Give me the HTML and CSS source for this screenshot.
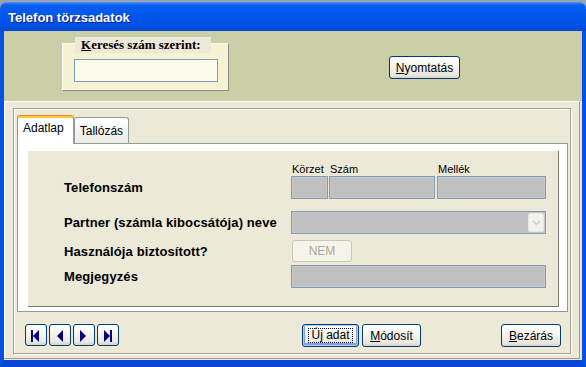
FILE: index.html
```html
<!DOCTYPE html>
<html lang="hu">
<head>
    <meta charset="UTF-8">
    <meta name="viewport" content="width=device-width, initial-scale=1.0">
    <title>Telefon törzsadatok</title>
    <link rel="stylesheet" href="styles.css">
</head>
<body>
    <div class="window">
        <div class="titlebar">Telefon törzsadatok</div>
        <div class="client">
            <div class="top">
                <div class="search-box">
                    <span class="search-label"><u>K</u>eresés szám szerint:</span>
                    <input type="text" class="search-input">
                </div>
                <button class="btn print-btn"><u>N</u>yomtatás</button>
            </div>
            <div class="panel">
                <div class="frame">
                    <div class="tabs">
                        <div class="tab active">Adatlap</div>
                        <div class="tab">Tallózás</div>
                    </div>
                    <div class="page">
                        <div class="form">
                            <div class="row head-row">
                                <span class="lbl"></span>
                                <span class="c-korzet">Körzet</span>
                                <span class="c-szam">Szám</span>
                                <span class="c-mellek">Mellék</span>
                            </div>
                            <div class="row phone-row">
                                <span class="lbl">Telefonszám</span>
                                <span class="field c-korzet"></span>
                                <span class="field c-szam"></span>
                                <span class="field c-mellek"></span>
                            </div>
                            <div class="row partner-row">
                                <span class="lbl">Partner (számla kibocsátója) neve</span>
                                <span class="field combo">
                                    <span class="combo-arrow">
                                        <svg width="9" height="6" viewBox="0 0 9 6"><path d="M1 1 L4.5 4.5 L8 1" fill="none" stroke="#d4d2c6" stroke-width="1.6"/></svg>
                                    </span>
                                </span>
                            </div>
                            <div class="row insured-row">
                                <span class="lbl">Használója biztosított?</span>
                                <button class="btn-disabled" disabled>NEM</button>
                            </div>
                            <div class="row note-row">
                                <span class="lbl">Megjegyzés</span>
                                <span class="field wide"></span>
                            </div>
                        </div>
                    </div>
                    <div class="bottom">
                        <div class="nav">
                            <button class="btn nav-btn"><svg width="20" height="20" viewBox="0 0 20 20"><rect x="5" y="5" width="2" height="12" fill="#000080"/><path d="M7 11 L13 5 L13 17 Z" fill="#000080"/></svg></button>
                            <button class="btn nav-btn"><svg width="20" height="20" viewBox="0 0 20 20"><path d="M7 11 L13 5 L13 17 Z" fill="#000080"/></svg></button>
                            <button class="btn nav-btn"><svg width="20" height="20" viewBox="0 0 20 20"><path d="M6 5 L12 11 L6 17 Z" fill="#000080"/></svg></button>
                            <button class="btn nav-btn"><svg width="20" height="20" viewBox="0 0 20 20"><path d="M6 5 L12 11 L6 17 Z" fill="#000080"/><rect x="12" y="5" width="2" height="12" fill="#000080"/></svg></button>
                        </div>
                        <button class="btn new-btn"><span class="focus">Ú<u>j</u> adat</span></button>
                        <button class="btn edit-btn"><u>M</u>ódosít</button>
                        <button class="btn close-btn"><u>B</u>ezárás</button>
                    </div>
                </div>
            </div>
        </div>
    </div>
</body>
</html>
```

FILE: styles.css
```css
body {
    margin: 0;
    padding-top: 2px;
    background-color: #9aa3b0;
    font-family: 'Liberation Sans', Arial, sans-serif;
    font-size: 12px;
    color: #000;
    overflow: hidden;
}
.window {
    width: 586px;
    height: 365px;
    display: flex;
    flex-direction: column;
}
.titlebar {
    height: 29px;
    box-sizing: border-box;
    padding: 2px 0 0 8px;
    line-height: 27px;
    font-size: 13px;
    font-weight: bold;
    color: #fff;
    text-shadow: 1px 1px 0 #0a1e8c;
    border-radius: 7px 7px 0 0;
    background: linear-gradient(#4a92f8 0, #0a5ff0 3px, #0058ee 40%, #0052e6 75%, #0048d8 100%);
}
.client {
    flex: 1;
    display: flex;
    flex-direction: column;
    border-left: 4px solid #0850e0;
    border-right: 4px solid #0850e0;
    border-bottom: 7px solid #0846d8;
    background-color: #ece9d8;
}
.top {
    height: 70px;
    display: flex;
    align-items: flex-start;
    background-color: #cbcfa8;
}
.search-box {
    margin: 12px 0 0 58px;
    width: 167px;
    height: 48px;
    box-sizing: border-box;
    border: 1px solid;
    border-color: #fff #8e8e84 #8e8e84 #fff;
    background-color: #f5f3d3;
}
.search-label {
    display: block;
    width: fit-content;
    margin: -7px 0 0 12px;
    padding: 0 10px 0 6px;
    line-height: 16px;
    background-color: #ece9d8;
    font-family: 'Liberation Serif', 'Times New Roman', serif;
    font-weight: bold;
    font-size: 13px;
}
.search-input {
    display: block;
    margin: 6px 0 0 11px;
    width: 144px;
    height: 23px;
    box-sizing: border-box;
    border: 1px solid #7f9db9;
    background-color: #fbfbec;
    padding: 0;
}
.btn {
    font-family: 'Liberation Sans', Arial, sans-serif;
    font-size: 12px;
    color: #000;
    padding: 0;
    border: 1px solid #003c74;
    border-radius: 3px;
    background: linear-gradient(#ffffff, #f5f4ef 45%, #e9e7df 85%, #d8d3c8);
    box-sizing: border-box;
}
.print-btn {
    margin: 25px 0 0 160px;
    width: 71px;
    height: 23px;
}
.panel {
    flex: 1;
    margin-bottom: 1px;
    margin-right: 2px;
    border-top: 1px solid #fff;
    border-left: 1px solid #fff;
    border-right: 1px solid #9d9b8d;
    border-bottom: 1px solid #9d9b8d;
    display: flex;
    flex-direction: column;
}
.frame {
    margin: 6px 8px 0 8px;
    height: 246px;
    box-sizing: border-box;
    border: 1px solid #a3a194;
    box-shadow: inset 1px 1px 0 #fff, 1px 1px 0 #fff;
    padding: 6px 2px 0 3px;
    display: flex;
    flex-direction: column;
}
.tabs {
    height: 28px;
    display: flex;
    align-items: flex-end;
}
.tab {
    height: 26px;
    box-sizing: border-box;
    padding: 1px 5px 0 5px;
    line-height: 24px;
    border: 1px solid #919b9c;
    border-bottom: none;
    border-radius: 3px 3px 0 0;
    background: linear-gradient(#ffffff, #f3f3ef 60%, #ecebe5);
}
.tab.active {
    position: relative;
    z-index: 1;
    height: 29px;
    margin-bottom: -1px;
    padding: 0 9px 4px 5px;
    border-top: 1px solid #e68b2c;
    box-shadow: inset 0 2px 0 #ffc73c;
    background: #fff;
}
.page {
    height: 169px;
    box-sizing: border-box;
    border: 1px solid #919b9c;
    background-color: #fff;
    padding: 7px 8px 4px 10px;
}
.form {
    height: 100%;
    box-sizing: border-box;
    background-color: #ece9d8;
    border-right: 1px solid #7a786c;
    border-bottom: 1px solid #7a786c;
    padding: 11px 0 0 36px;
}
.row {
    display: flex;
    align-items: center;
}
.lbl {
    width: 227px;
    flex-shrink: 0;
    font-size: 13px;
    font-weight: bold;
    letter-spacing: 0.1px;
}
.head-row {
    height: 14px;
    font-size: 11px;
    line-height: 14px;
}
.head-row .c-korzet, .head-row .c-szam, .head-row .c-mellek {
    padding-left: 1px;
    box-sizing: border-box;
}
.c-korzet { width: 37px; }
.c-szam { width: 106px; margin-left: 1px; }
.c-mellek { width: 109px; margin-left: 2px; }
.field {
    height: 23px;
    box-sizing: border-box;
    border: 1px solid #7f9db9;
    background-color: #c0c0c0;
    box-shadow: inset 0 0 0 1px #c4c6c8;
}
.phone-row { height: 23px; }
.partner-row { height: 23px; margin-top: 12px; }
.insured-row { height: 22px; margin-top: 6px; }
.note-row { height: 23px; margin-top: 3px; }
.combo {
    width: 255px;
    display: flex;
    justify-content: flex-end;
    padding: 1px;
}
.combo-arrow {
    width: 16px;
    height: 19px;
    box-sizing: border-box;
    border: 1px solid #e8e8e2;
    border-radius: 2px;
    background-color: #f3f3ee;
    display: flex;
    align-items: center;
    justify-content: center;
}
.wide { width: 255px; }
.btn-disabled {
    margin-left: 1px;
    width: 60px;
    height: 22px;
    padding: 0;
    font-family: 'Liberation Sans', Arial, sans-serif;
    font-size: 12px;
    color: #aca899;
    border: 1px solid #c9c7ba;
    border-radius: 3px;
    background-color: #f5f4ea;
}
.bottom {
    margin-top: 12px;
    display: flex;
    align-items: flex-start;
    padding-left: 8px;
}
.nav {
    display: flex;
    gap: 2px;
}
.nav-btn {
    width: 22px;
    height: 22px;
    display: flex;
    align-items: center;
    justify-content: center;
}
.new-btn {
    margin-left: 183px;
    width: 57px;
    height: 23px;
    box-shadow: inset 0 0 0 1px #b3cdf5, inset 0 -1px 0 2px #7c9fe8;
}
.focus {
    display: inline-block;
    border: 1px dotted #000;
    padding: 0 2px;
    line-height: 13px;
}
.edit-btn {
    margin-left: 3px;
    width: 59px;
    height: 23px;
}
.close-btn {
    margin-left: 80px;
    width: 60px;
    height: 23px;
}
```
